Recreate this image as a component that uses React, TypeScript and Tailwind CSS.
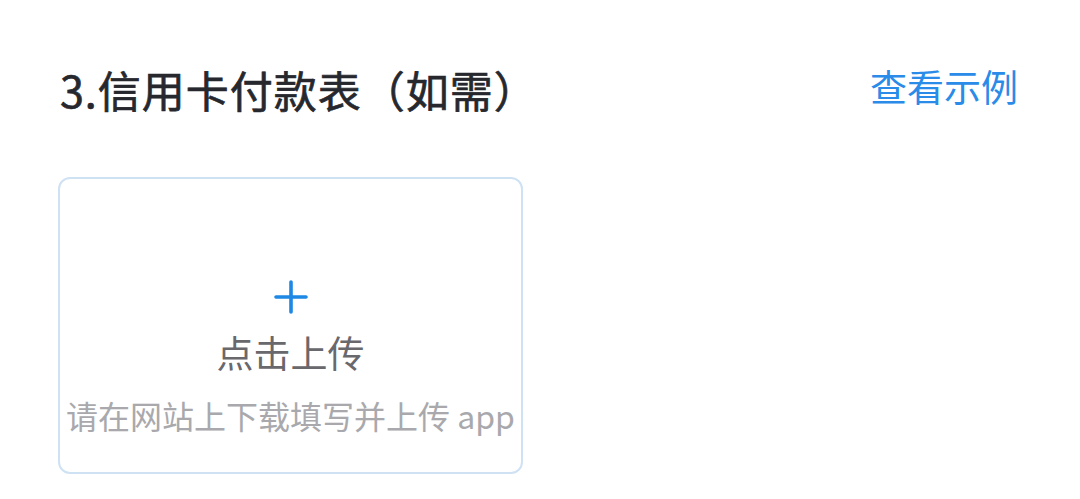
import React from "react";

/* -------------------- Component -------------------- */

const PlusIcon: React.FC = () => (
  <svg width="34" height="34" viewBox="0 0 34 34" fill="none">
    <path
      d="M17 2v30M2 17h30"
      stroke="#1e88e5"
      strokeWidth="3.6"
      strokeLinecap="round"
    />
  </svg>
);

const App: React.FC = () => {
  return (
    <div
      className="w-[1080px] h-[499px] bg-white overflow-hidden pl-[58px] pr-[62px]"
      style={{ fontFamily: '"Noto Sans CJK SC", "Noto Sans", sans-serif' }}
    >
      {/* Header */}
      <div className="flex items-center justify-between pt-[68px]">
        <h2 className="text-[43px] leading-none font-normal tracking-[1px] text-[#26282e] [-webkit-text-stroke:0.7px_#26282e] pl-[2px]">
          3.信用卡付款表（如需）
        </h2>
        <button className="text-[37px] leading-none text-[#2a8be8] -mt-[6px]">
          查看示例
        </button>
      </div>

      {/* Upload card */}
      <div className="mt-[66px] w-[465px] h-[297px] border-2 border-[#cfe2f4] rounded-[12px] flex flex-col items-center pt-[101px]">
        <PlusIcon />
        <p className="mt-[20px] text-[37px] leading-none text-[#68686d]">
          点击上传
        </p>
        <p className="mt-[28px] text-[32px] leading-none text-[#a9a9ad] whitespace-nowrap">
          请在网站上下载填写并上传 app
        </p>
      </div>
    </div>
  );
};

export default App;
